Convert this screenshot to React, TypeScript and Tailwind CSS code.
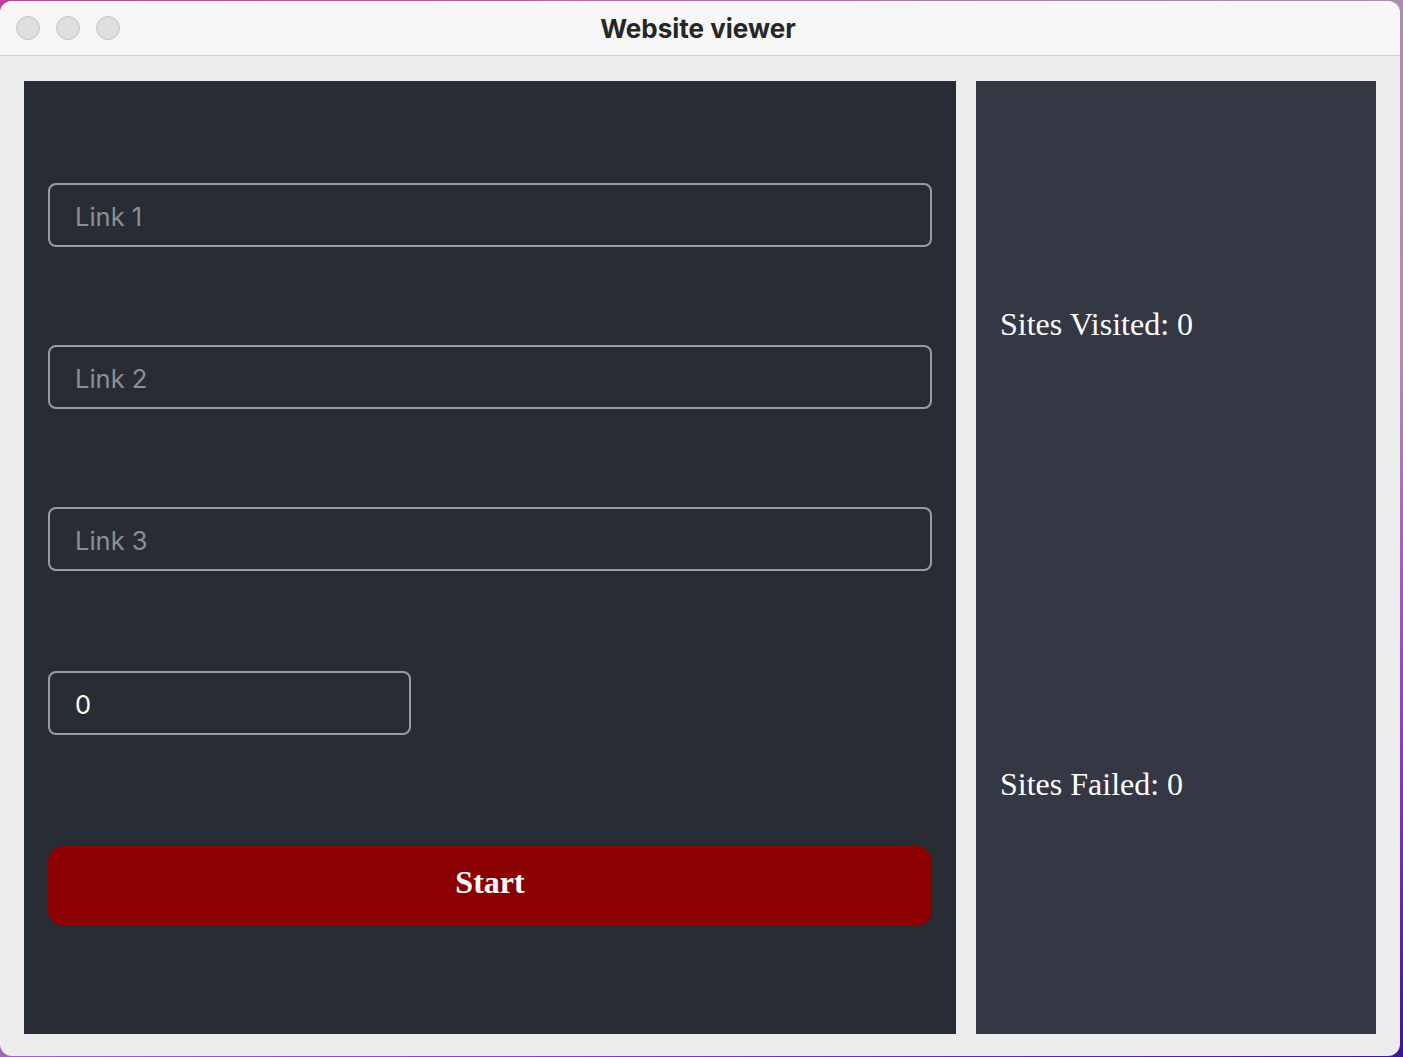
import React from 'react';

const fields = ['Link 1', 'Link 2', 'Link 3'];

function TrafficLight() {
  return <span className="block w-[24px] h-[24px] rounded-full bg-[#dfdfdf] border border-[#c6c6c6]" />;
}

function App() {
  return (
    <div className="w-[1403px] h-[1057px] bg-[linear-gradient(160deg,#b8449a_0%,#a98eb0_30%,#b88ab0_55%,#8a3cc0_80%,#3a1890_100%)] pt-px pr-[3px] pb-px">
      <div className="w-[1400px] h-[1055px] rounded-[12px] overflow-hidden bg-[#ececec] flex flex-col">
        <div className="relative h-[55px] shrink-0 bg-[#f6f6f6] border-b border-[#d2d2d2] flex items-center justify-center">
          <div className="absolute left-[16px] top-[15px] flex gap-[16px]">
            <TrafficLight />
            <TrafficLight />
            <TrafficLight />
          </div>
          <span className="font-['Inter',sans-serif] font-bold text-[26px] text-[#262626] pr-[4px]">Website viewer</span>
        </div>

        <div className="flex-1 flex gap-[20px] pl-[24px] pr-[24px] pt-[25px] pb-[22px]">
          <div className="w-[932px] bg-[#282c35] px-[24px] pt-[102px] flex flex-col">
            {fields.map((f, i) => (
              <input
                key={f}
                placeholder={f}
                className={`${i > 0 ? 'mt-[98px]' : ''} w-full h-[64px] rounded-[8px] border-2 border-[#9c9c9c] bg-transparent pl-[25px] pr-[25px] pt-[3px] font-['Inter',sans-serif] text-[25.5px] text-white placeholder:text-[#8e8f92] outline-none`}
              />
            ))}
            <input
              defaultValue="0"
              className="mt-[100px] w-[363px] h-[64px] rounded-[8px] border-2 border-[#9c9c9c] bg-transparent pl-[25px] pr-[25px] pt-[3px] font-['Inter',sans-serif] text-[25.5px] text-white outline-none"
            />
            <button className="mt-[111px] w-full h-[80px] rounded-[16px] bg-[#8b0000] text-white font-['Liberation_Serif',serif] font-bold text-[32px] pb-[8px]">
              Start
            </button>
          </div>

          <div className="w-[400px] bg-[#343844] px-[24px] pt-[223px] flex flex-col font-['Liberation_Serif',serif] text-[32px] text-white leading-[40px]">
            <div>Sites Visited: 0</div>
            <div className="mt-[420px]">Sites Failed: 0</div>
          </div>
        </div>
      </div>
    </div>
  );
}

export default App;
